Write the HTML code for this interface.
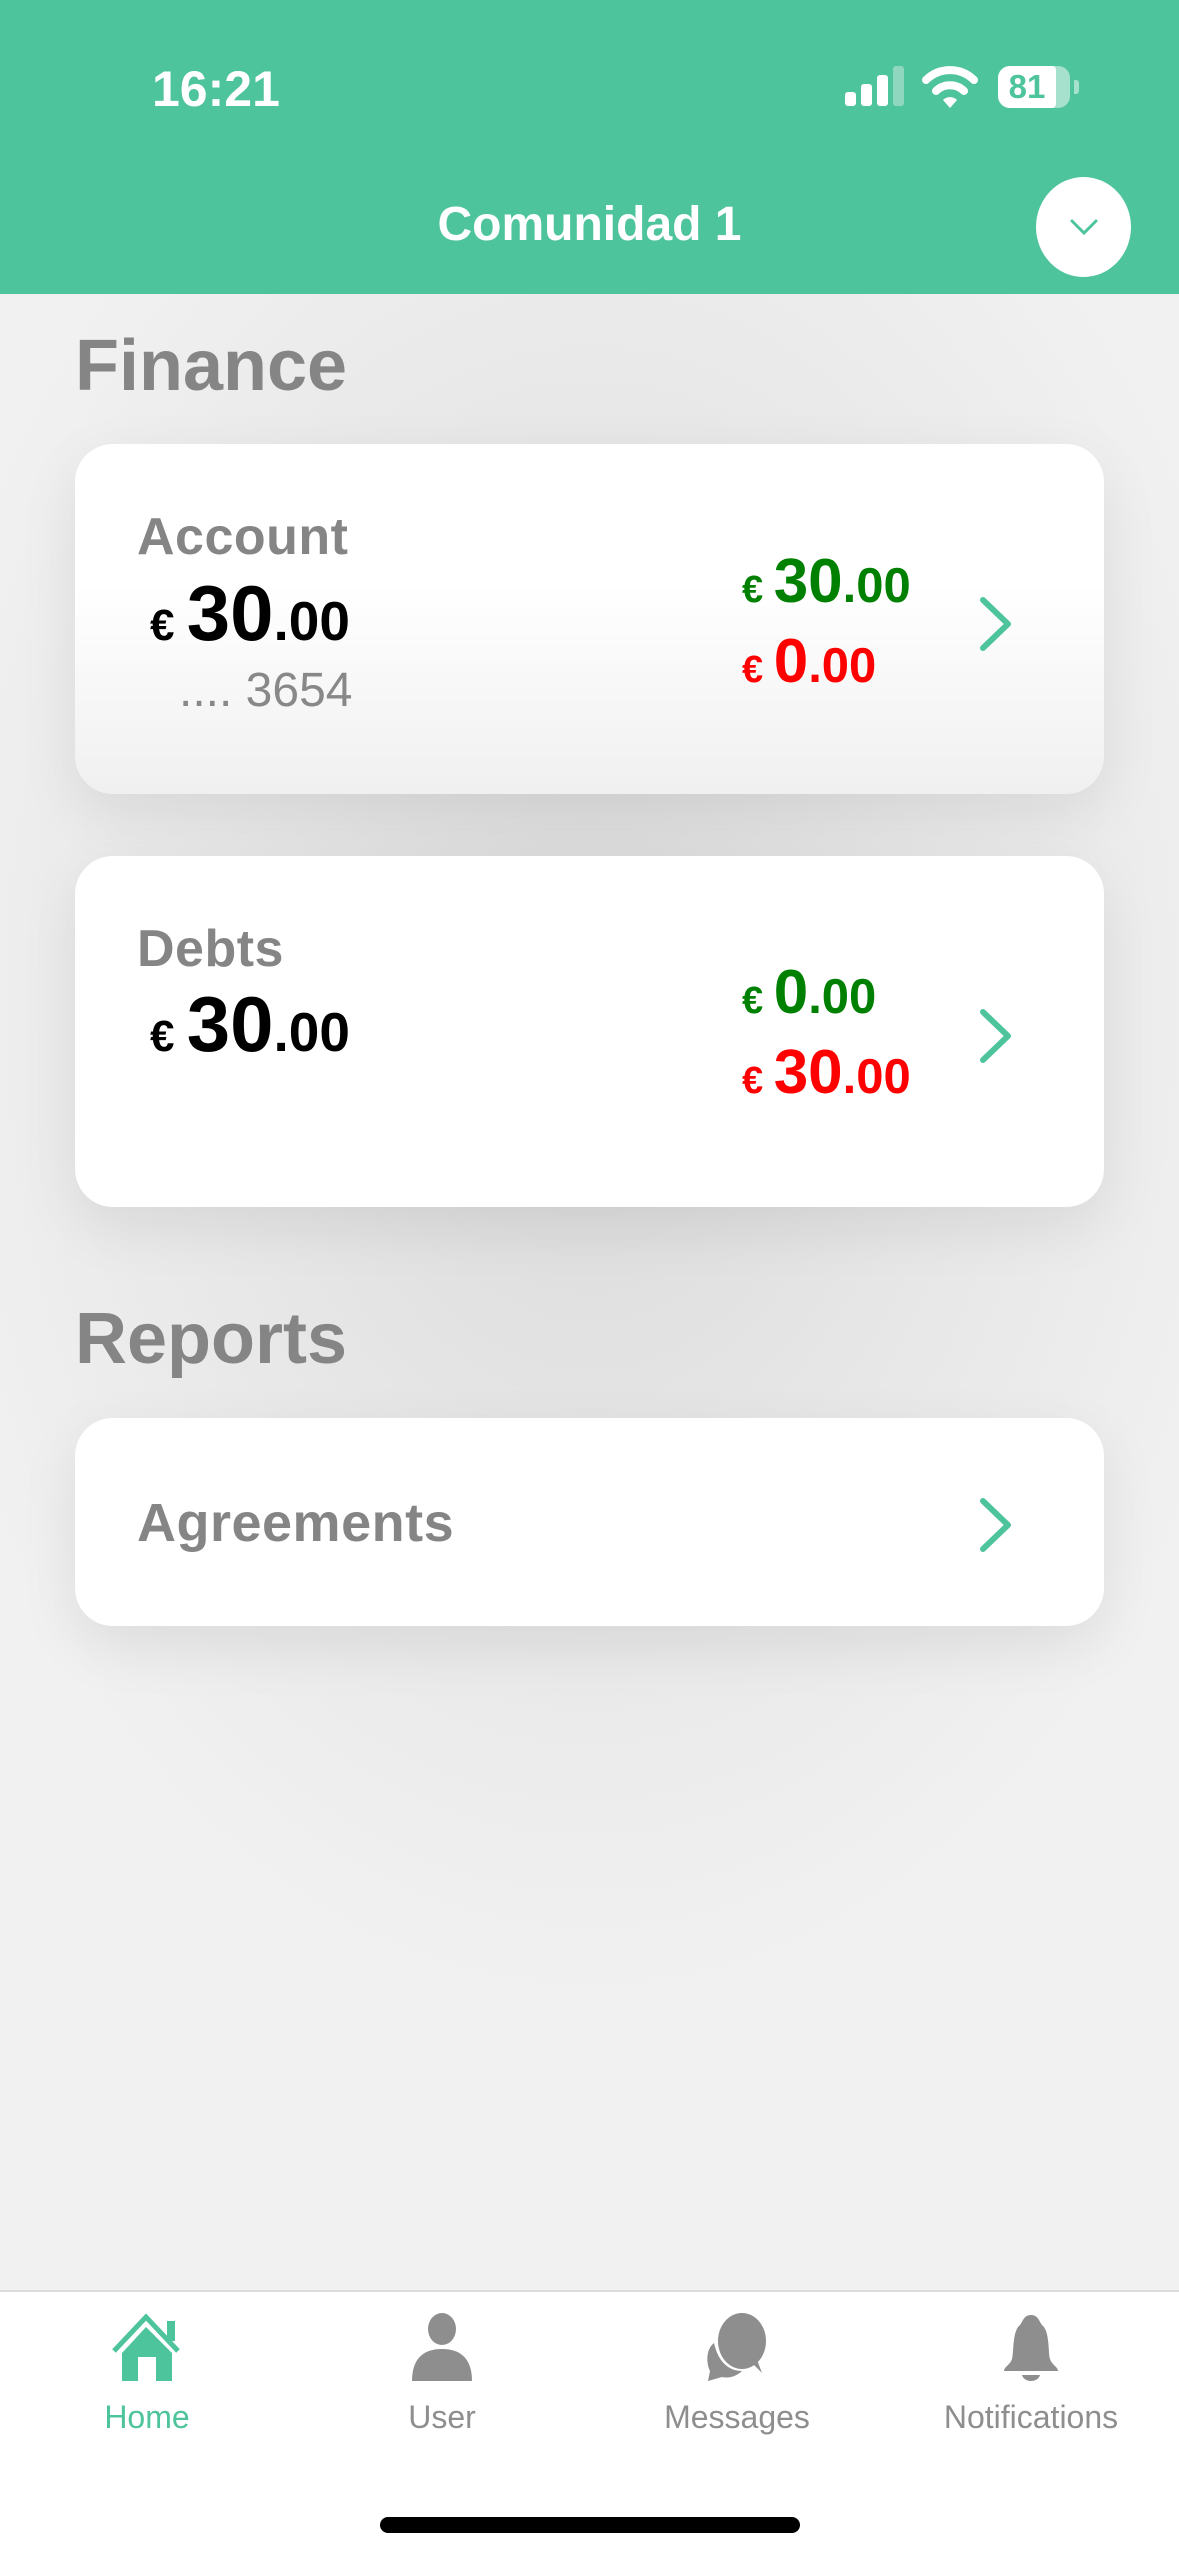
<!DOCTYPE html>
<html><head><meta charset="utf-8"><style>
*{margin:0;padding:0;box-sizing:border-box}
body{width:1179px;height:2556px;position:relative;overflow:hidden;font-family:"Liberation Sans",sans-serif;background:radial-gradient(ellipse 700px 1000px at 590px 1000px,#d9d9d9 0%,#e6e6e6 50%,#f1f1f1 100%);}
.hdr{position:absolute;left:0;top:0;width:1179px;height:294px;background:#4ec49c;}
.abs{position:absolute;white-space:nowrap}
.card{position:absolute;left:75px;width:1029px;border-radius:38px;background:#fff;box-shadow:0 20px 60px rgba(0,0,0,0.08);}
.h{font-weight:bold;color:#858585}
.lbl{font-weight:bold;color:#858585;font-size:52px;letter-spacing:0.5px}
.amt{font-weight:bold;color:#000}
.g{color:#008000;font-weight:bold}
.r{color:#ff0000;font-weight:bold}
.chev{position:absolute;width:36px;height:56px}
.tab{position:absolute;top:2290px;left:0;width:1179px;height:266px;background:#fff;border-top:2px solid #dcdcdc}
.tl{position:absolute;top:2399px;font-size:32px;color:#8e8e8e;transform:translateX(-50%)}
</style></head><body>
<div class="hdr"></div>
<div class="abs" style="left:152px;top:60px;font-size:50px;color:#fff;font-weight:bold">16:21</div>
<div class="abs" style="left:845px;top:92px;width:11px;height:14px;background:#fff;border-radius:3px"></div>
<div class="abs" style="left:861px;top:84px;width:11px;height:22px;background:#fff;border-radius:3px"></div>
<div class="abs" style="left:877px;top:75px;width:11px;height:31px;background:#fff;border-radius:3px"></div>
<div class="abs" style="left:893px;top:66px;width:11px;height:40px;background:#8fd8bf;border-radius:3px"></div>
<svg class="abs" style="left:922px;top:64px" width="56" height="46" viewBox="0 0 56 46"><path d="M4 16 A34 34 0 0 1 52 16" stroke="#fff" stroke-width="8" fill="none" stroke-linecap="round"/><path d="M14 27 A20 20 0 0 1 42 27" stroke="#fff" stroke-width="8" fill="none" stroke-linecap="round"/><path d="M21 36 L28 44 L35 36 A10 10 0 0 0 21 36Z" fill="#fff"/></svg>
<div class="abs" style="left:998px;top:66px;width:72px;height:42px;border-radius:12px;background:#a6e1cd"></div>
<div class="abs" style="left:998px;top:66px;width:58px;height:42px;border-radius:12px 4px 4px 12px;background:#fff;color:#4ec49c;font-weight:bold;font-size:33px;text-align:center;line-height:42px">81</div>
<div class="abs" style="left:1074px;top:80px;width:5px;height:14px;border-radius:0 3px 3px 0;background:#a6e1cd"></div>
<div class="abs" style="left:0;width:1179px;text-align:center;top:197px;font-size:48px;color:#fff;font-weight:bold">Comunidad 1</div>
<div class="abs" style="left:1036px;top:177px;width:95px;height:100px;border-radius:50%;background:#fff"></div>
<svg class="abs" style="left:1069px;top:218px" width="30" height="18" viewBox="0 0 30 18"><path d="M3 3 L15 15 L27 3" stroke="#4ec49c" stroke-width="3" fill="none" stroke-linecap="round"/></svg>

<div class="abs h" style="left:75px;top:325px;font-size:72px">Finance</div>
<div class="card" style="top:444px;height:350px;background:linear-gradient(#fff 40%,#f0f0f0)"></div>
<div class="abs lbl" style="left:137px;top:507px">Account</div>
<div class="abs amt" style="left:150px;top:568px"><span style="font-size:44px">€ </span><span style="font-size:78px">30</span><span style="font-size:55px">.00</span></div>
<div class="abs" style="left:179px;top:663px;font-size:48px;color:#888">.... 3654</div>
<div class="abs g" style="left:742px;top:546px"><span style="font-size:38px">€ </span><span style="font-size:62px">30</span><span style="font-size:49px">.00</span></div>
<div class="abs r" style="left:742px;top:626px"><span style="font-size:38px">€ </span><span style="font-size:62px">0</span><span style="font-size:49px">.00</span></div>
<svg class="chev" style="left:978px;top:596px" viewBox="0 0 36 56"><path d="M5 4 L30 28 L5 52" stroke="#4ec49c" stroke-width="6" fill="none" stroke-linecap="round" stroke-linejoin="round"/></svg>

<div class="card" style="top:856px;height:351px"></div>
<div class="abs lbl" style="left:137px;top:919px">Debts</div>
<div class="abs amt" style="left:150px;top:979px"><span style="font-size:44px">€ </span><span style="font-size:78px">30</span><span style="font-size:55px">.00</span></div>
<div class="abs g" style="left:742px;top:957px"><span style="font-size:38px">€ </span><span style="font-size:62px">0</span><span style="font-size:49px">.00</span></div>
<div class="abs r" style="left:742px;top:1037px"><span style="font-size:38px">€ </span><span style="font-size:62px">30</span><span style="font-size:49px">.00</span></div>
<svg class="chev" style="left:978px;top:1008px" viewBox="0 0 36 56"><path d="M5 4 L30 28 L5 52" stroke="#4ec49c" stroke-width="6" fill="none" stroke-linecap="round" stroke-linejoin="round"/></svg>

<div class="abs h" style="left:75px;top:1298px;font-size:72px">Reports</div>
<div class="card" style="top:1418px;height:208px"></div>
<div class="abs lbl" style="left:137px;top:1492px;font-size:54px">Agreements</div>
<svg class="chev" style="left:978px;top:1497px" viewBox="0 0 36 56"><path d="M5 4 L30 28 L5 52" stroke="#4ec49c" stroke-width="6" fill="none" stroke-linecap="round" stroke-linejoin="round"/></svg>

<div class="tab"></div>
<svg class="abs" style="left:110px;top:2313px" width="74" height="70" viewBox="0 0 74 70"><path d="M4 38 L36 4 L68 38" stroke="#4ec49c" stroke-width="5" fill="none"/><rect x="57" y="8" width="8" height="20" fill="#4ec49c"/><path d="M12 40 L36 14 L62 40 L62 68 L46 68 L46 44 L28 44 L28 68 L12 68Z" fill="#4ec49c"/></svg>
<svg class="abs" style="left:410px;top:2313px" width="64" height="70" viewBox="0 0 64 70"><ellipse cx="32" cy="16" rx="14" ry="16" fill="#8e8e8e"/><path d="M2 68 C2 45 14 36 32 36 C50 36 62 45 62 68Z" fill="#8e8e8e"/></svg>
<svg class="abs" style="left:700px;top:2313px" width="74" height="70" viewBox="0 0 74 70"><path d="M14 30 C6 36 6 50 10 58 L8 68 L22 64 C30 66 38 62 42 58 C28 58 18 48 14 30Z" fill="#8e8e8e"/><ellipse cx="42" cy="28" rx="24" ry="28" fill="#8e8e8e"/><path d="M52 50 L62 60 L56 44Z" fill="#8e8e8e"/></svg>
<svg class="abs" style="left:1000px;top:2313px" width="62" height="70" viewBox="0 0 62 70"><path d="M31 2 C24 2 23 8 20 12 C12 18 14 40 12 46 C10 52 4 54 4 58 L58 58 C58 54 52 52 50 46 C48 40 50 18 42 12 C39 8 38 2 31 2Z" fill="#8e8e8e"/><path d="M22 62 L40 62 C38 70 24 70 22 62Z" fill="#8e8e8e"/></svg>
<div class="tl" style="left:147px;color:#4ec49c">Home</div>
<div class="tl" style="left:442px">User</div>
<div class="tl" style="left:737px">Messages</div>
<div class="tl" style="left:1031px">Notifications</div>
<div class="abs" style="left:380px;top:2517px;width:420px;height:16px;border-radius:8px;background:#000"></div>
</body></html>
